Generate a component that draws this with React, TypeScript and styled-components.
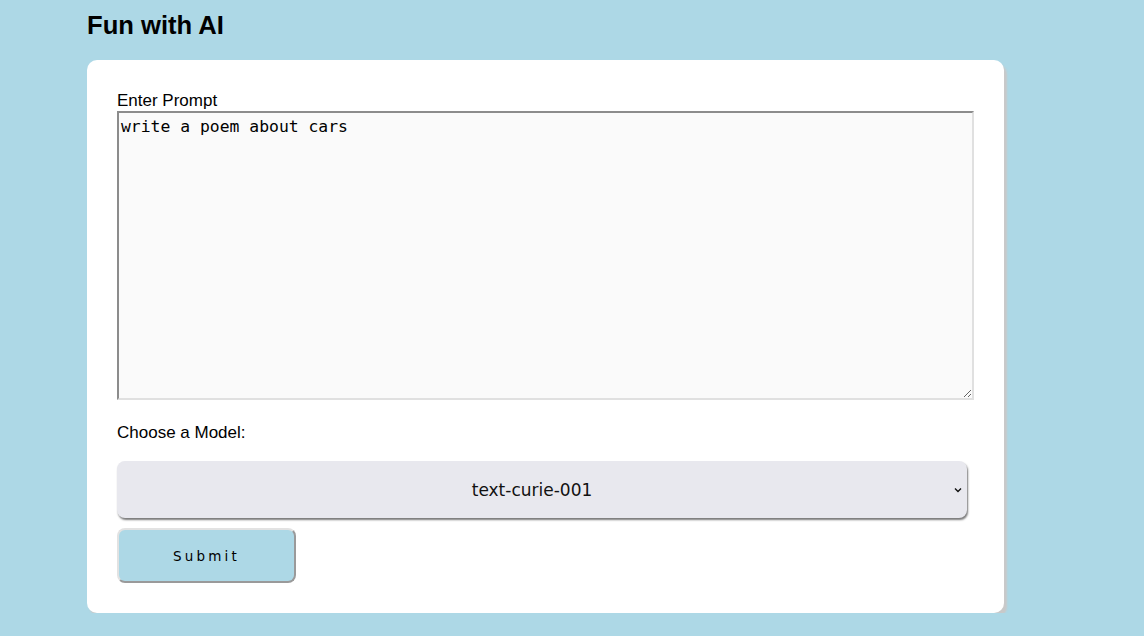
import React from "react";
import styled, { createGlobalStyle } from "styled-components";

const Global = createGlobalStyle`
  html, body { margin: 0; padding: 0; background: #add8e6; }
  body { font-family: "Liberation Sans", Arial, sans-serif; }
`;

const Page = styled.div`
  padding: 0 0 0 87px;
  width: 917px;
`;

const Title = styled.h1`
  margin: 0;
  padding-top: 10px;
  height: 50px;
  font-size: 25.6px;
  font-weight: bold;
  line-height: 30px;
  color: #000;
`;

const Card = styled.form`
  background: #fff;
  border-radius: 10px;
  box-shadow: 3px 4px 2px #c9c9c9;
  padding: 30px 30px 30px 30px;
  display: flex;
  flex-direction: column;
  align-items: flex-start;
`;

const Label = styled.label`
  font-size: 17px;
  line-height: 21px;
  color: #000;
  display: block;
`;

const PromptBox = styled.textarea`
  box-sizing: border-box;
  width: 857px;
  height: 289px;
  margin: 0;
  padding: 2px 2px;
  border-style: solid;
  border-width: 2px;
  border-color: #8c8c8c #e0e0e0 #e0e0e0 #8c8c8c;
  background: #fafafa;
  font-family: "DejaVu Sans Mono", monospace;
  font-size: 16.4px;
  line-height: 24px;
  color: #000;
  resize: both;
  outline: none;
`;

const ModelLabel = styled(Label)`
  margin-top: 22px;
`;

const SelectWrap = styled.div`
  position: relative;
  margin-top: 18px;
  width: 850px;
  height: 57px;
`;

const Select = styled.select`
  box-sizing: border-box;
  appearance: none;
  -webkit-appearance: none;
  width: 100%;
  height: 100%;
  border: none;
  border-radius: 8px;
  background: #e8e8ee;
  box-shadow: 1px 2px 2px #7a7a7a;
  font-family: "DejaVu Sans", sans-serif;
  font-size: 17px;
  text-align: center;
  text-align-last: center;
  color: #111;
  padding: 0 28px 0 8px;
  outline: none;
`;

const Chevron = styled.svg`
  position: absolute;
  right: 5px;
  top: 26px;
  width: 8px;
  height: 6px;
  pointer-events: none;
`;

const Submit = styled.button`
  box-sizing: border-box;
  margin-top: 10px;
  width: 179px;
  height: 55px;
  border-style: solid;
  border-width: 2px;
  border-color: #e2e2e2 #9a9a9a #9a9a9a #e2e2e2;
  border-radius: 8px;
  background: #add8e6;
  font-family: "DejaVu Sans", sans-serif;
  font-size: 13.5px;
  letter-spacing: 3.2px;
  color: #000;
  cursor: pointer;
`;

export default function App() {
  return (
    <>
      <Global />
      <Page>
        <Title>Fun with AI</Title>
        <Card onSubmit={(e) => e.preventDefault()}>
          <Label htmlFor="prompt">Enter Prompt</Label>
          <PromptBox id="prompt" defaultValue="write a poem about cars" />
          <ModelLabel htmlFor="model">Choose a Model:</ModelLabel>
          <SelectWrap>
            <Select id="model" defaultValue="text-curie-001">
              <option>text-davinci-003</option>
              <option>text-curie-001</option>
              <option>text-babbage-001</option>
              <option>text-ada-001</option>
            </Select>
            <Chevron viewBox="0 0 8 6" aria-hidden="true">
              <path d="M1 1.5 L4 4.5 L7 1.5" fill="none" stroke="#111" strokeWidth="1.4" />
            </Chevron>
          </SelectWrap>
          <Submit type="submit">Submit</Submit>
        </Card>
      </Page>
    </>
  );
}
